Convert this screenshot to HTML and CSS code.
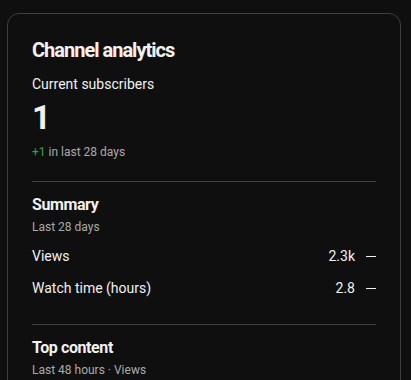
FILE: index.html
```html
<!DOCTYPE html>
<html lang="en">
<head>
<meta charset="utf-8">
<link rel="stylesheet" href="styles.css">
</head>
<body>
<div class="card">
  <h2 class="title">Channel analytics</h2>
  <div class="label">Current subscribers</div>
  <div class="big">1</div>
  <div class="delta"><span class="green">+1</span> in last 28 days</div>
  <hr class="divider divider-1">
  <h3 class="section">Summary</h3>
  <div class="sub">Last 28 days</div>
  <div class="rows">
    <div class="row"><span class="name">Views</span><span class="val">2.3k</span><span class="dash"></span></div>
    <div class="row"><span class="name">Watch time (hours)</span><span class="val">2.8</span><span class="dash"></span></div>
  </div>
  <hr class="divider divider-2">
  <h3 class="section">Top content</h3>
  <div class="sub">Last 48 hours · Views</div>
</div>
</body>
</html>
```
FILE: styles.css
```css
html, body {
  background: #0f0f0f;
}
body {
  margin: 0;
  padding: 13px 10px 0 7px;
  font-family: Roboto, "Noto Sans", sans-serif;
  color: #f1f1f1;
}
.card {
  border: 1px solid #3f3f3f;
  border-radius: 12px;
  background: #0f0f0f;
  padding: 24px 24px 24px 24px;
}
.title {
  margin: 0;
  font-size: 20px;
  line-height: 24px;
  font-weight: 700;
  letter-spacing: -1px;
}
.label {
  margin-top: 12px;
  font-size: 14px;
  line-height: 20px;
}
.big {
  margin-top: 4px;
  font-size: 33px;
  line-height: 40px;
  font-weight: 700;
}
.delta {
  margin-top: 6px;
  font-size: 12px;
  line-height: 16px;
  color: #aaaaaa;
}
.green {
  color: #2ba640;
}
.divider {
  border: 0;
  height: 1px;
  background: #3f3f3f;
  margin: 0;
}
.divider-1 {
  margin-top: 21px;
}
.divider-2 {
  margin-top: 26px;
}
.section {
  margin: 12px 0 0 0;
  font-size: 16px;
  line-height: 22px;
  font-weight: 700;
  letter-spacing: -0.4px;
}
.sub {
  margin-top: 3px;
  font-size: 12px;
  line-height: 16px;
  color: #aaaaaa;
}
.rows {
  margin-top: 11px;
  display: flex;
  flex-direction: column;
  gap: 12px;
}
.row {
  display: flex;
  align-items: center;
  font-size: 14px;
  line-height: 20px;
}
.name {
  flex: 1;
}
.val {
  margin-right: 11px;
}
.dash {
  width: 10px;
  height: 1px;
  background: #f1f1f1;
}
```
